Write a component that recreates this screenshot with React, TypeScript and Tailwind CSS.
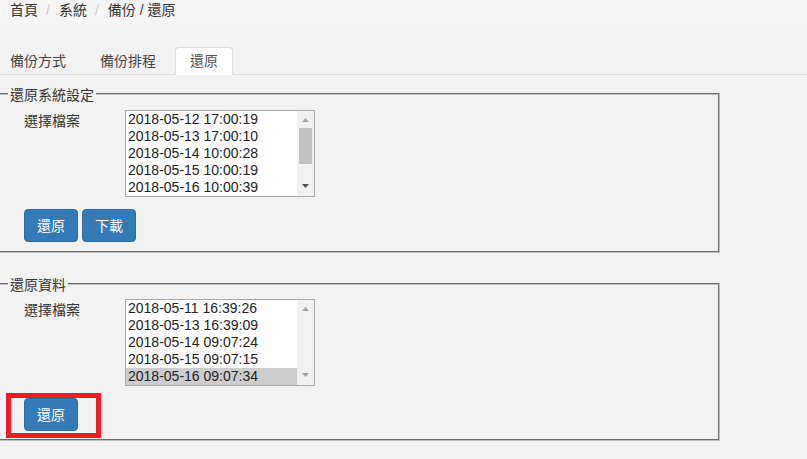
import React from "react";

function Arrow({ up, color }: { up: boolean; color: string }) {
  return (
    <svg width="7" height="4" viewBox="0 0 7 4" className="block">
      <polygon points={up ? "3.5,0 7,4 0,4" : "0,0 7,0 3.5,4"} fill={color} />
    </svg>
  );
}

function ListBox({
  items,
  selected,
  thumb,
}: {
  items: string[];
  selected?: number;
  thumb: boolean;
}) {
  return (
    <div className="flex w-[190px] h-[87px] border border-[#a9a9a9] bg-white">
      <div className="flex-1 flex flex-col">
        {items.map((t, i) => (
          <div
            key={t}
            className={
              i === selected
                ? "h-[17px] leading-[17px] pl-[2px] text-[14px] text-[#222] bg-[#cdcdcd] font-['Liberation_Sans',Arial,sans-serif]"
                : "h-[17px] leading-[17px] pl-[2px] text-[14px] text-[#222] font-['Liberation_Sans',Arial,sans-serif]"
            }
          >
            {t}
          </div>
        ))}
      </div>
      <div className="w-[17px] bg-[#f1f1f1] flex flex-col">
        <div className="h-[17px] flex items-center justify-center">
          <Arrow up color="#a3a3a3" />
        </div>
        <div className="flex-1 flex flex-col items-center">
          {thumb ? <div className="w-[13px] h-[36px] bg-[#c1c1c1]" /> : null}
        </div>
        <div className="h-[17px] flex items-center justify-center pb-[3px]">
          <Arrow up={false} color={thumb ? "#505050" : "#a3a3a3"} />
        </div>
      </div>
    </div>
  );
}

function Btn({ children }: { children: React.ReactNode }) {
  return (
    <button className="h-[33px] px-[12px] rounded-[4px] bg-[#337ab7] border border-[#2e6da4] text-white text-[14px] leading-5">
      {children}
    </button>
  );
}

export default function App() {
  return (
    <div className="min-h-screen bg-[#f2f2f2] text-[#333] text-[14px] font-['Liberation_Sans','Noto_Sans_CJK_TC',sans-serif]">
      <div className="h-[25px] bg-[#f5f5f5] pl-[10px] leading-5 flex items-start">
        <span>首頁</span>
        <span className="ml-[8px] mr-[9px] text-[#ccc]">/</span>
        <span>系統</span>
        <span className="ml-[8px] mr-[9px] text-[#ccc]">/</span>
        <span>備份 / 還原</span>
      </div>

      <div className="mt-[22px] flex items-end gap-[4px] border-b border-[#ddd]">
        <div className="-mb-px border border-transparent pt-[3px] pb-[3px] pl-[9px] pr-[14px] leading-5 text-[#444]">
          備份方式
        </div>
        <div className="-mb-px border border-transparent pt-[3px] pb-[3px] px-[14px] leading-5 text-[#444]">
          備份排程
        </div>
        <div className="-mb-px border border-[#ddd] border-b-white bg-white rounded-t-[4px] pt-[3px] pb-[3px] px-[14px] leading-5 text-[#555]">
          還原
        </div>
      </div>

      <section className="mt-[18px] w-[720px] border-2 border-l-0 [border-style:groove] border-[#c0c0c0] pb-[9px]">
        <div className="-mt-[10px] ml-[8px] px-[2px] w-fit leading-5 bg-[#f2f2f2]">還原系統設定</div>
        <div className="mt-[5px] flex pl-[24px]">
          <div className="w-[101px] pt-[1px] leading-5">選擇檔案</div>
          <ListBox
            thumb
            items={[
              "2018-05-12 17:00:19",
              "2018-05-13 17:00:10",
              "2018-05-14 10:00:28",
              "2018-05-15 10:00:19",
              "2018-05-16 10:00:39",
            ]}
          />
        </div>
        <div className="mt-[12px] pl-[24px] flex gap-[4px]">
          <Btn>還原</Btn>
          <Btn>下載</Btn>
        </div>
      </section>

      <section className="mt-[30px] w-[720px] border-2 border-l-0 [border-style:groove] border-[#c0c0c0] pb-[1px]">
        <div className="-mt-[10px] ml-[8px] px-[2px] w-fit leading-5 bg-[#f2f2f2]">還原資料</div>
        <div className="mt-[4px] flex pl-[24px]">
          <div className="w-[101px] pt-[1px] leading-5">選擇檔案</div>
          <ListBox
            thumb={false}
            selected={4}
            items={[
              "2018-05-11 16:39:26",
              "2018-05-13 16:39:09",
              "2018-05-14 09:07:24",
              "2018-05-15 09:07:15",
              "2018-05-16 09:07:34",
            ]}
          />
        </div>
        <div className="mt-[7px] ml-[6px] w-fit border-[5px] border-[#ed1c24] pl-[13px] pr-[18px] pb-[2px]">
          <Btn>還原</Btn>
        </div>
      </section>
    </div>
  );
}
